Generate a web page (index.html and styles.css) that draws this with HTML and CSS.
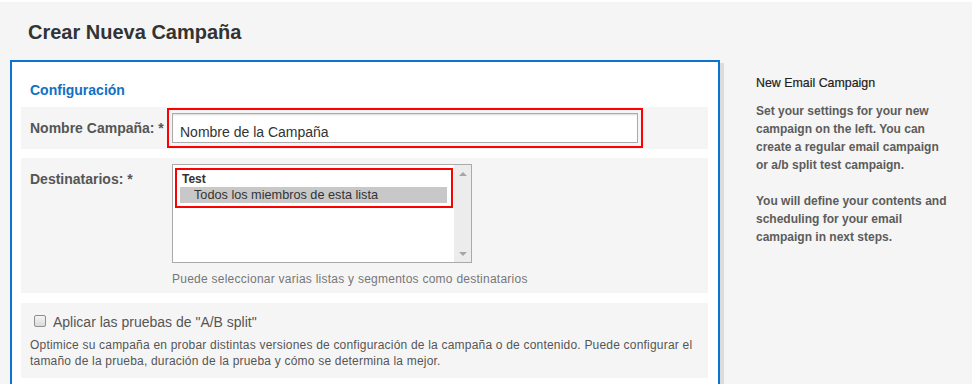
FILE: index.html
```html
<!DOCTYPE html>
<html lang="es">
<head>
  <meta charset="UTF-8">
  <meta name="viewport" content="width=device-width, initial-scale=1.0">
  <title>Crear Nueva Campaña</title>
  <link rel="stylesheet" href="styles.css">
</head>
<body>

<header class="page-head">
  <h1>Crear Nueva Campaña</h1>
</header>

<div class="layout">
  <main class="panel">
    <h2 class="section-title">Configuración</h2>

    <!-- Campaign name -->
    <div class="form-row row-name">
      <label class="field-label" for="campaign-name">Nombre Campaña: *</label>
      <div class="field">
        <div class="mark mark-input">
          <input type="text" id="campaign-name" class="text-input" value="Nombre de la Campaña">
        </div>
      </div>
    </div>

    <!-- Recipients -->
    <div class="form-row row-top">
      <label class="field-label">Destinatarios: *</label>
      <div class="field">
        <div class="listbox">
          <div class="listbox-items">
            <div class="mark mark-list">
              <div class="opt-group">Test</div>
              <div class="opt selected">Todos los miembros de esta lista</div>
            </div>
          </div>
          <div class="scrollbar">
            <span class="arrow up"></span>
            <span class="arrow down"></span>
          </div>
        </div>
        <p class="hint">Puede seleccionar varias listas y segmentos como destinatarios</p>
      </div>
    </div>

    <!-- A/B split -->
    <div class="form-row row-block">
      <label class="check"><span class="checkbox"></span>Aplicar las pruebas de "A/B split"</label>
      <p class="desc">Optimice su campaña en probar distintas versiones de configuración de la campaña o de contenido. Puede configurar el tamaño de la prueba, duración de la prueba y cómo se determina la mejor.</p>
    </div>
  </main>

  <aside class="sidebar">
    <h3>New Email Campaign</h3>
    <p>Set your settings for your new campaign on the left. You can create a regular email campaign or a/b split test campaign.</p>
    <p>You will define your contents and scheduling for your email campaign in next steps.</p>
  </aside>
</div>

</body>
</html>
```

FILE: styles.css
```css
* { margin: 0; padding: 0; box-sizing: border-box; }
body { background: #f5f5f5; border-top: 2px solid #fff; font-family: 'Liberation Sans', Arial, sans-serif; color: #333; overflow: hidden; }

.page-head h1 { font-size: 20px; line-height: 24px; font-weight: 700; color: #333; padding: 18px 0 0 28px; margin-bottom: 16px; }

.layout { display: flex; align-items: flex-start; }

.panel { width: 710px; margin-left: 10px; background: #fff; border: 2px solid #0b74d0; border-bottom: none; box-shadow: 4px 3px 0 #dcdcdc; padding: 19px 10px 40px 9px; }
.section-title { font-size: 14px; line-height: 18px; font-weight: 700; color: #1070c4; padding-left: 9px; margin-bottom: 8px; }

.form-row { background: #f5f5f5; display: flex; padding-left: 9px; }
.row-name { align-items: center; padding-top: 1px; padding-bottom: 1px; margin-bottom: 9px; }
.row-top { align-items: flex-start; padding-top: 6px; padding-bottom: 5px; margin-bottom: 10px; }
.row-block { flex-direction: column; padding: 9px 10px 9px 9px; }

.field-label { width: 142px; flex-shrink: 0; font-size: 14px; line-height: 18px; font-weight: 700; color: #555; }
.row-top .field-label { padding-top: 6px; }
.field { flex: 1; }

/* red highlight boxes */
.mark { border: 2px solid #f00; }
.mark-input { width: 476px; margin-left: -5px; padding: 3px; }

.text-input { display: block; width: 466px; height: 30px; border: 1px solid #aaa; box-shadow: inset 0 2px 2px -1px rgba(0,0,0,0.15); padding: 7px 7px 0; font-family: 'Liberation Sans', Arial, sans-serif; font-size: 14px; color: #333; background: #fff; outline: none; }

.listbox { width: 300px; height: 99px; border: 1px solid #aaa; background: #fff; display: flex; }
.listbox-items { flex: 1; padding: 3px 1px 0 2px; }
.mark-list { padding: 1px 4px 3px 3px; }
.opt-group { font-size: 12px; line-height: 16px; font-weight: 700; color: #333; padding-left: 2px; }
.opt { font-size: 12.7px; line-height: 16px; color: #333; padding-left: 14px; }
.opt.selected { background: #c8c8c8; }

.scrollbar { width: 17px; background: #ececec; display: flex; flex-direction: column; justify-content: space-between; align-items: center; padding: 7px 0 6px; }
.arrow { width: 0; height: 0; border-left: 4px solid transparent; border-right: 4px solid transparent; }
.arrow.up { border-bottom: 4px solid #a6a6a6; }
.arrow.down { border-top: 4px solid #a6a6a6; }

.hint { font-size: 12px; line-height: 18px; color: #777; letter-spacing: 0.25px; margin-top: 7px; }

.check { display: flex; align-items: center; font-size: 14px; line-height: 20px; color: #555; }
.checkbox { width: 12px; height: 12px; margin: -2px 7px 0 4px; border: 1px solid #8f8f8f; border-radius: 2px; background: linear-gradient(#f4f4f4, #dadada); }
.desc { font-size: 12px; line-height: 16px; color: #555; letter-spacing: 0.2px; margin-top: 5px; }

.sidebar { flex: 1; padding: 14px 20px 0 36px; }
.sidebar h3 { font-size: 12.4px; line-height: 18px; font-weight: 400; color: #222; margin-bottom: 10px; -webkit-text-stroke: 0.2px #222; }
.sidebar p { width: 192px; font-size: 12px; line-height: 18px; font-weight: 700; color: #5c5c5c; margin-bottom: 18px; }
```
